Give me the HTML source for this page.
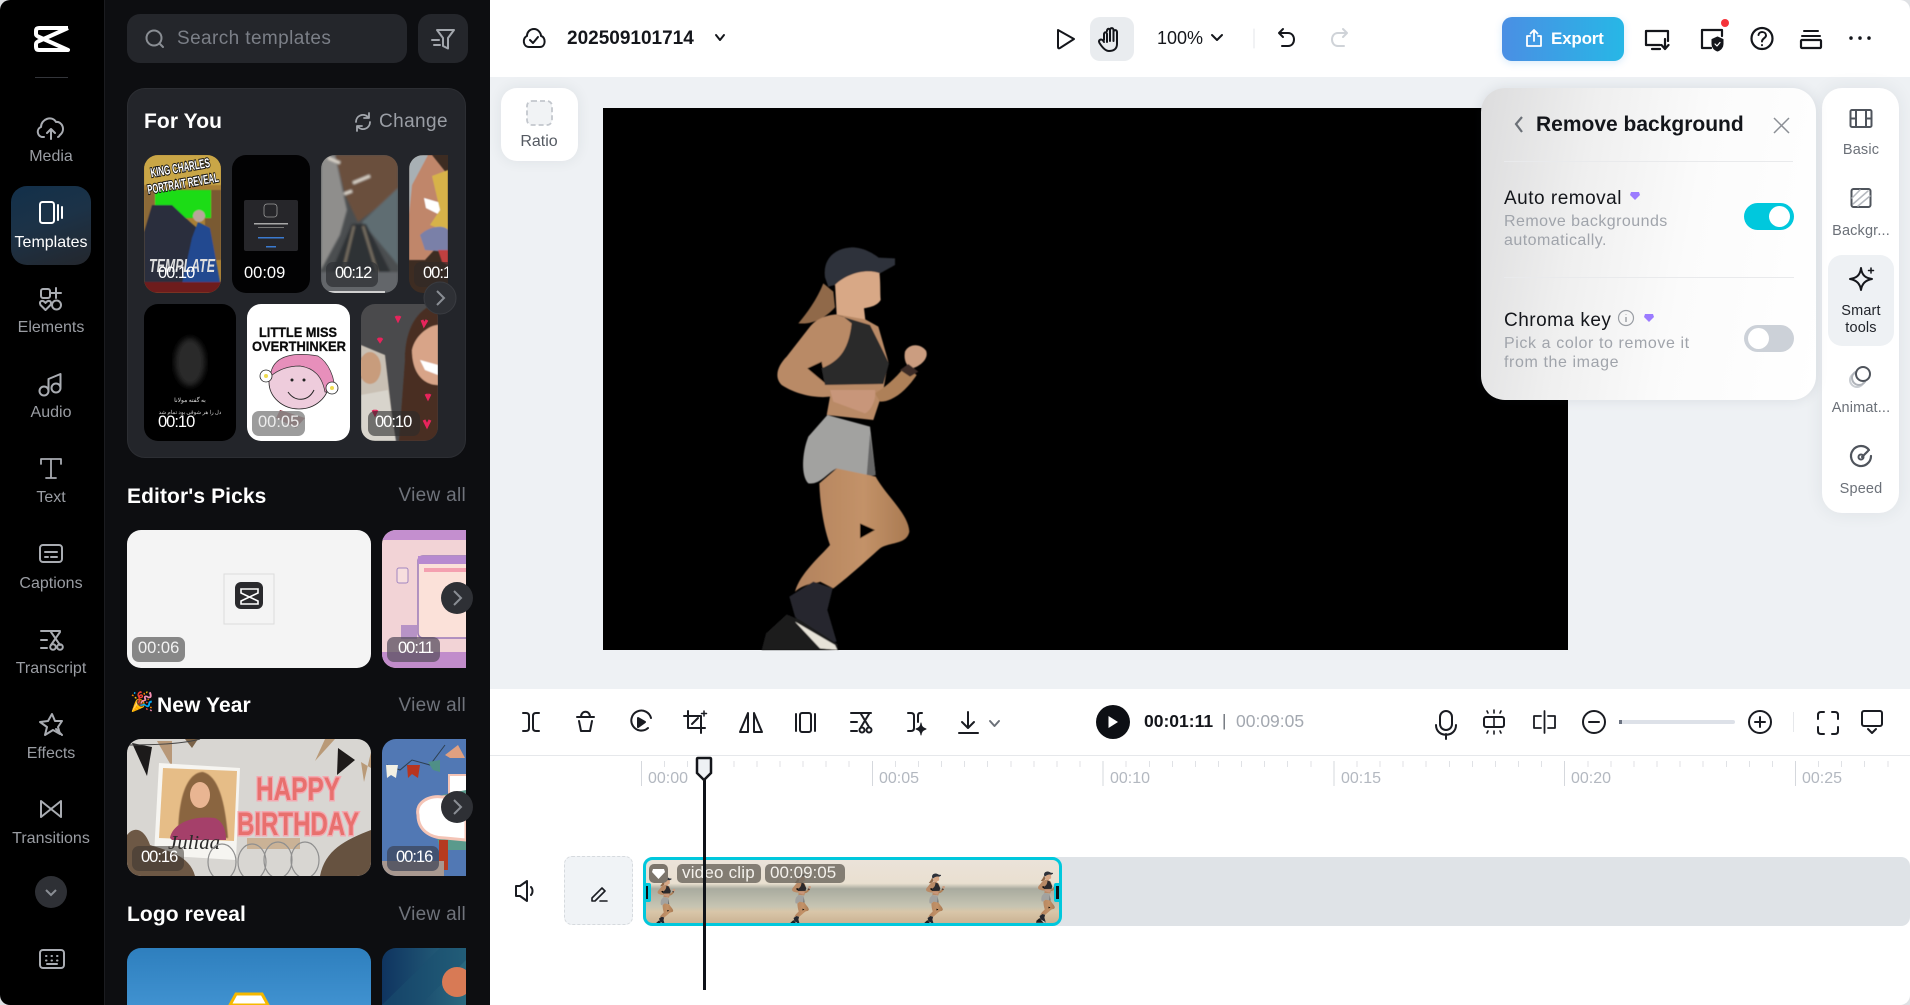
<!DOCTYPE html>
<html><head><meta charset="utf-8"><title>Editor</title>
<style>
*{box-sizing:border-box}
html,body{margin:0;padding:0;width:1910px;height:1005px;overflow:hidden;background:#dfe1e4;font-family:"Liberation Sans","Noto Sans CJK SC",sans-serif}
.a{position:absolute}
.t{position:absolute;white-space:nowrap;line-height:1.2}
.c{transform:translateX(-50%);text-align:center}
.rl{font-size:16px;color:#9a9da3;left:51px}
.sec{font-size:21px;font-weight:700;color:#fff;left:127px;letter-spacing:.1px}
.va{font-size:19px;color:#6f737b;right:1444px;letter-spacing:.3px}
.rt{font-size:14.5px;color:#6b7078;left:1861px;letter-spacing:.15px}
.rul{font-size:16px;color:#b3b8c0}
.d{font-size:16.5px;color:#fff}
.n{font-size:16.5px;color:#fff;letter-spacing:-1px}
</style></head><body>

<div class="a" style="left:0;top:0;width:1910px;height:1005px;background:#fff;border-radius:10px;overflow:hidden">
<!-- rail + panel -->
<div class="a" style="left:0;top:0;width:104px;height:1005px;background:#000"></div>
<div class="a" style="left:104px;top:0;width:386px;height:1005px;background:#0d0e11;border-left:1px solid #1b1c20"></div>
<div class="a" style="left:11px;top:186px;width:80px;height:79px;border-radius:16px;background:linear-gradient(160deg,#12304a 0%,#1c3247 45%,#24272d 100%)"></div>
<div class="a" style="left:35px;top:77px;width:33px;height:1px;background:#33353a"></div>
<div class="a" style="left:127px;top:14px;width:280px;height:49px;border-radius:13px;background:#24262b"></div>
<div class="a" style="left:418px;top:14px;width:50px;height:49px;border-radius:13px;background:#24262b"></div>
<div class="a" style="left:127px;top:88px;width:339px;height:370px;border-radius:18px;background:#23252a;border:1px solid #2c2e33"></div>
<div class="a" style="left:490px;top:469px;width:7px;height:69px;border-radius:0 8px 8px 0;background:#1d1f23"></div>

<!-- main -->
<div class="a" style="left:490px;top:77px;width:1420px;height:612px;background:#eef1f4"></div>
<div class="a" style="left:603px;top:108px;width:965px;height:542px;background:#000"></div>
<div class="a" style="left:1090px;top:17px;width:44px;height:44px;border-radius:10px;background:#e9ecef"></div>
<div class="a" style="left:1502px;top:17px;width:122px;height:44px;border-radius:10px;background:linear-gradient(90deg,#4a8fe4,#27b7e6);box-shadow:0 2px 8px rgba(60,150,230,.2)"></div>
<div class="a" style="left:501px;top:88px;width:77px;height:73px;border-radius:16px;background:#fff;box-shadow:0 0 14px rgba(40,50,70,.08)"></div>
<div class="a" style="left:1822px;top:88px;width:77px;height:425px;border-radius:20px;background:#fff;box-shadow:0 0 18px rgba(40,50,70,.08)"></div>
<div class="a" style="left:1828px;top:255px;width:66px;height:91px;border-radius:14px;background:#eef1f4"></div>
<div class="a" style="left:1481px;top:88px;width:335px;height:312px;border-radius:24px;background:linear-gradient(100deg,#dcdcdd 0%,#efefef 30%,#fbfbfb 60%,#fff 100%);box-shadow:0 0 12px rgba(40,50,70,.1)"></div>
<div class="a" style="left:1504px;top:161px;width:289px;height:1px;background:#e9eaec"></div>
<div class="a" style="left:1504px;top:277px;width:290px;height:1px;background:#e9eaec"></div>
<div class="a" style="left:1744px;top:203px;width:50px;height:27px;border-radius:14px;background:#00c8dd"></div>
<div class="a" style="left:1769px;top:206px;width:21px;height:21px;border-radius:50%;background:#fff"></div>
<div class="a" style="left:1744px;top:325px;width:50px;height:27px;border-radius:14px;background:#ccd1d8"></div>
<div class="a" style="left:1748px;top:328px;width:21px;height:21px;border-radius:50%;background:#fff"></div>

<!-- timeline -->
<div class="a" style="left:490px;top:755px;width:1420px;height:1px;background:#e6e8eb"></div>
<div class="a" style="left:641px;top:761px;width:1269px;height:6px;background:repeating-linear-gradient(90deg,#e0e2e6 0 1px,transparent 1px 23.08px)"></div>
<div class="a" style="left:641px;top:761px;width:1269px;height:25px;background:repeating-linear-gradient(90deg,#d5d8dd 0 1px,transparent 1px 230.8px)"></div>
<div class="a" style="left:564px;top:856px;width:69px;height:69px;border-radius:8px;background:#f0f3f6;border:1px dashed #d6dade"></div>
<div class="a" style="left:643px;top:857px;width:1267px;height:69px;border-radius:9px;background:#dfe3e7"></div>
<div class="a" style="left:1619px;top:720px;width:116px;height:4px;border-radius:2px;background:#dde1e8"></div>
<div class="a" style="left:1619px;top:720px;width:3px;height:4px;background:#6b7280"></div>
<div class="a" style="left:1793px;top:712px;width:1px;height:20px;background:#e6e8eb"></div>

<svg class="a" style="left:0;top:0" width="1910" height="1005" viewBox="0 0 1910 1005" fill="none" xmlns="http://www.w3.org/2000/svg">
<defs>
<clipPath id="c1"><rect x="144" y="155" width="77" height="138" rx="14"/></clipPath>
<clipPath id="c2"><rect x="232" y="155" width="78" height="138" rx="14"/></clipPath>
<clipPath id="c3"><rect x="321" y="155" width="77" height="138" rx="14"/></clipPath>
<clipPath id="c4"><path d="M423 155H448V293H423a14 14 0 0 1-14-14V169a14 14 0 0 1 14-14z"/></clipPath>
<clipPath id="c5"><rect x="144" y="304" width="92" height="137" rx="14"/></clipPath>
<clipPath id="c6"><rect x="247" y="304" width="103" height="137" rx="14"/></clipPath>
<clipPath id="c7"><rect x="361" y="304" width="77" height="137" rx="14"/></clipPath>
<clipPath id="e1"><rect x="127" y="530" width="244" height="138" rx="14"/></clipPath>
<clipPath id="e2"><path d="M396 530H466V668H396a14 14 0 0 1-14-14V544a14 14 0 0 1 14-14z"/></clipPath>
<clipPath id="n1"><rect x="127" y="739" width="244" height="137" rx="14"/></clipPath>
<clipPath id="n2"><path d="M396 739H466V876H396a14 14 0 0 1-14-14V753a14 14 0 0 1 14-14z"/></clipPath>
<clipPath id="l1"><rect x="127" y="948" width="244" height="90" rx="14"/></clipPath>
<clipPath id="l2"><path d="M396 948H466V1040H396a14 14 0 0 1-14-14V962a14 14 0 0 1 14-14z"/></clipPath>
<clipPath id="clip"><rect x="646" y="860" width="413" height="63" rx="5"/></clipPath>
<filter id="b05"><feGaussianBlur stdDeviation=".6"/></filter>
<filter id="b1"><feGaussianBlur stdDeviation="1"/></filter>
<filter id="b2"><feGaussianBlur stdDeviation="3"/></filter>
<linearGradient id="beach" x1="0" y1="0" x2="0" y2="1"><stop offset="0" stop-color="#ebe2da"/><stop offset=".38" stop-color="#e9e0d0"/><stop offset=".46" stop-color="#a9ab9f"/><stop offset=".72" stop-color="#c6c4b2"/><stop offset=".8" stop-color="#d9c6a9"/><stop offset="1" stop-color="#c8b08f"/></linearGradient>
<linearGradient id="lb" x1="0" y1="0" x2="0" y2="1"><stop offset="0" stop-color="#2e7fbe"/><stop offset="1" stop-color="#4a9cda"/></linearGradient>
<linearGradient id="lb2" x1="0" y1="0" x2="1" y2="0"><stop offset="0" stop-color="#0f3460"/><stop offset="1" stop-color="#2a6a80"/></linearGradient>
<linearGradient id="skin" x1="0" y1="0" x2="1" y2="0"><stop offset="0" stop-color="#b2825e"/><stop offset=".6" stop-color="#c39268"/><stop offset="1" stop-color="#a97a52"/></linearGradient>
<symbol id="runner" viewBox="0 0 720 1320">
<path d="M310 190C290 240 260 280 235 310C280 315 320 290 345 262L340 215Z" fill="#90694a"/>
<path d="M345 190C390 150 450 145 478 155C482 190 480 215 482 240C470 260 445 262 432 265L436 300L350 285Z" fill="#d8a886"/>
<path d="M315 172C308 120 340 85 395 82C430 82 460 100 476 113L525 115L525 135L480 160C440 145 380 160 345 195L325 200Z" fill="#2e323a"/>
<path d="M350 283L436 298L475 320L505 425L490 510L460 600L320 585L330 530C290 535 230 525 185 495C160 470 175 435 200 410L270 320C290 295 320 285 350 283Z" fill="#b98a66"/>
<path d="M262 445L305 425L318 492Z" fill="#000"/>
<path d="M465 520C500 500 530 470 555 440L590 465C560 510 520 545 480 545Z" fill="#ae8058"/>
<path d="M555 395C565 372 600 368 618 392C628 415 600 440 575 445C560 440 550 420 555 395Z" fill="#cb9d80"/>
<path d="M540 450L565 432L595 455L570 470Z" fill="#3a2a28"/>
<path d="M330 510L465 510C470 540 450 575 435 580L340 545Z" fill="#c8967a"/>
<path d="M305 445C350 425 385 400 395 310L370 290L345 283L400 300L450 315L480 375L507 430L490 492L315 495Z" fill="#2b292c"/>
<path d="M322 585L450 620L467 765L385 778L350 745C320 760 300 795 265 790C243 770 245 700 265 650Z" fill="#a2a2a0"/>
<path d="M450 640L467 765L440 768Z" fill="#666"/>
<path d="M298 790L350 745L467 770C500 830 565 880 568 935C560 975 510 965 480 985C430 1030 380 1075 340 1105L300 1085C300 1090 260 1085 225 1115C240 1060 300 1010 330 975C310 920 300 850 298 790Z" fill="url(#skin)"/>
<path d="M420 910L465 930L420 955Z" fill="#000"/>
<path d="M208 1130L280 1085L338 1105L322 1170L350 1265L300 1272L225 1190Z" fill="#25272f"/>
<path d="M125 1290L138 1240L200 1183L240 1200L352 1272L355 1290Z" fill="#1d1c1e"/>
<path d="M225 1205L345 1275L352 1290L300 1285Z" fill="#e7e3d8"/>
</symbol>
</defs>

<!-- For You thumbs -->
<g clip-path="url(#c1)">
<rect x="144" y="155" width="77" height="138" fill="#a87f35"/>
<g filter="url(#b05)">
<rect x="144" y="155" width="77" height="30" fill="#c9a646"/>
<rect x="205" y="190" width="16" height="70" fill="#7a5a30"/>
<rect x="144" y="190" width="12" height="60" fill="#8c6a38"/>
<rect x="155" y="190" width="56" height="28" fill="#1fdc19"/>
<path d="M144 232L152 205L172 205L190 222L205 235L221 293H144Z" fill="#2a2f3d"/>
<path d="M180 293L192 238L198 222L210 228L216 260L222 293Z" fill="#204a90"/>
<circle cx="199" cy="216" r="6" fill="#b8a59a"/>
<rect x="144" y="282" width="77" height="11" fill="#6e1a1f"/>
</g>
<g transform="rotate(-10 182 178)" font-family="Liberation Sans" font-size="13" font-weight="700" fill="#fff" stroke="#111" stroke-width="2" paint-order="stroke" text-anchor="middle"><text x="182" y="172" textLength="60" lengthAdjust="spacingAndGlyphs">KING CHARLES</text><text x="182" y="188" textLength="72" lengthAdjust="spacingAndGlyphs">PORTRAIT REVEAL</text></g>
<text x="149" y="272" font-family="Liberation Sans" font-size="18" font-weight="700" font-style="italic" fill="#dedede" textLength="66" lengthAdjust="spacingAndGlyphs">TEMPLATE</text>
</g>
<g clip-path="url(#c2)">
<rect x="232" y="155" width="78" height="138" fill="#020203"/>
<rect x="244" y="200" width="54" height="51" rx="2" fill="#26262a"/>
<rect x="264" y="204" width="13" height="13" rx="3" stroke="#9a9a9a" stroke-width=".8"/>
<rect x="254" y="223" width="34" height="1.5" fill="#a8a8a8"/><rect x="258" y="227" width="26" height="1" fill="#777"/>
<rect x="258" y="237" width="26" height="1.5" fill="#3a7ad0"/><rect x="266" y="246" width="10" height="1.5" fill="#3a7ad0"/>
</g>
<g clip-path="url(#c3)">
<rect x="321" y="155" width="77" height="138" fill="#4b4e50"/>
<g filter="url(#b1)">
<path d="M321 155H398V192L358 222L345 195L335 155Z" fill="#6a4f3c"/>
<path d="M321 155H335L347 210L340 235L321 270Z" fill="#8f8e8c"/>
<path d="M398 188L362 222L398 265Z" fill="#5f6d72"/>
<path d="M330 275L352 224L366 224L392 275Z" fill="#2e3134"/>
<path d="M342 275L354 226M378 275L363 226" stroke="#786f62" stroke-width="2.500"/>
<rect x="321" y="272" width="77" height="21" fill="#63666a"/>
<path d="M353 183L370 176M328 158L340 163M344 194L352 191" stroke="#d8d2c8" stroke-width="3"/>
</g>
<rect x="326" y="262" width="52" height="25" rx="7" fill="#2f3236" opacity=".75"/>
<rect x="325" y="291" width="60" height="2" fill="#d0d0d0"/>
</g>
<g clip-path="url(#c4)">
<rect x="409" y="155" width="39" height="138" fill="#3d2c22"/>
<g filter="url(#b05)">
<path d="M409 155H432L448 175V235L425 260H409Z" fill="#c0866a"/>
<path d="M409 155H428L412 185L409 215Z" fill="#a8b0b4"/>
<path d="M424 198L448 205L440 215L426 208Z" fill="#fff"/>
<path d="M432 176L448 170V232L430 225L440 210Z" fill="#d7b24a"/>
<path d="M420 235C430 225 445 225 448 230V252L425 250Z" fill="#7a80a8"/>
<path d="M438 250L448 250V265L442 262Z" fill="#c04040"/>
</g>
<rect x="414" y="262" width="40" height="25" rx="7" fill="#2f2a28" opacity=".6"/>
</g>
<g clip-path="url(#c5)">
<rect x="144" y="304" width="92" height="137" fill="#000"/>
<ellipse cx="190" cy="362" rx="15" ry="24" fill="#2c2c2c" filter="url(#b2)"/>
<text x="190" y="402" font-family="Noto Sans CJK SC,Liberation Sans,sans-serif" font-size="6" fill="#ddd" text-anchor="middle" direction="rtl">به گفته مولانا</text>
<text x="190" y="414" font-family="Noto Sans CJK SC,Liberation Sans,sans-serif" font-size="5.5" fill="#ccc" text-anchor="middle" direction="rtl">دل را هر شوقی بود تمام شد</text>
</g>
<g clip-path="url(#c6)">
<rect x="247" y="304" width="103" height="137" fill="#fff"/>
<text x="298" y="337" font-family="Liberation Sans" font-size="14" font-weight="700" fill="#0b0b0b" text-anchor="middle" textLength="78" lengthAdjust="spacingAndGlyphs" stroke="#0b0b0b" stroke-width=".3">LITTLE MISS</text>
<text x="299" y="351" font-family="Liberation Sans" font-size="14" font-weight="700" fill="#0b0b0b" text-anchor="middle" textLength="94" lengthAdjust="spacingAndGlyphs" stroke="#0b0b0b" stroke-width=".3">OVERTHINKER</text>
<ellipse cx="299" cy="382" rx="30" ry="27" fill="#eeccdc" stroke="#222" stroke-width=".8"/>
<path d="M271 372C275 355 295 352 318 356C328 362 336 378 334 392L325 392C322 376 314 368 300 366C288 366 278 370 271 376Z" fill="#e78fbb" stroke="#333" stroke-width=".7"/>
<circle cx="266" cy="376" r="6" fill="#fff" stroke="#222" stroke-width=".8"/><circle cx="266" cy="376" r="2" fill="#f0dc50"/>
<circle cx="332" cy="388" r="6" fill="#fff" stroke="#222" stroke-width=".8"/><circle cx="332" cy="388" r="2" fill="#f0dc50"/>
<path d="M288 392C295 402 308 402 314 390" stroke="#222" stroke-width="1"/><circle cx="292" cy="380" r="1.500" fill="#222"/><circle cx="304" cy="380" r="1.500" fill="#222"/>
<path d="M280 410L305 418L296 428L276 418Z" fill="#8a2f3a"/>
<rect x="252" y="411" width="53" height="25" rx="7" fill="#8b8b8b" opacity=".85"/>
</g>
<g clip-path="url(#c7)">
<rect x="361" y="304" width="77" height="137" fill="#4a4a4c"/>
<g filter="url(#b05)">
<path d="M361 345L385 355L395 441H361Z" fill="#c9c0b4"/>
<ellipse cx="370" cy="368" rx="11" ry="16" fill="#c89c7c"/>
<path d="M361 395L388 390L396 441H361Z" fill="#d8d4cc"/>
<path d="M399 441L405 360C405 320 425 305 438 304V441Z" fill="#4a2e20"/>
<path d="M412 350C415 335 430 325 438 325V385C425 385 412 375 412 350Z" fill="#d8a488"/>
<path d="M420 360L438 365V375L425 370Z" fill="#fff"/>
</g>
<path d="M396 316l2 4 2-4M422 320l2 5 3-5M378 338l2 3 2-3M426 394l2 4 2-4M424 420l3 6 3-6M373 410l2 4 2-4" stroke="#e8245c" stroke-width="3"/>
<rect x="368" y="411" width="52" height="25" rx="7" fill="#2c2c2c" opacity=".6"/>
</g>
<circle cx="440" cy="298" r="16" fill="#2e3035" stroke="#3a3c41"/>
<path d="M437 291l7 7-7 7" stroke="#8a8e94" stroke-width="2"/>

<!-- Editor's picks -->
<g clip-path="url(#e1)">
<rect x="127" y="530" width="244" height="138" fill="#f4f4f4"/>
<rect x="224" y="574" width="50" height="50" fill="none" stroke="#dcdcdc"/>
<rect x="235" y="582" width="28" height="27" rx="6" fill="#2a2a2d"/>
<path d="M258 589H241V593L258 601V604H241V601L258 593Z" stroke="#fff" stroke-width="1.600"/>
</g>
<g clip-path="url(#e2)">
<rect x="382" y="530" width="84" height="138" fill="#f2d3d6"/>
<rect x="382" y="530" width="84" height="10" fill="#c48fcf"/>
<rect x="382" y="652" width="84" height="16" fill="#c18ccb"/>
<rect x="418" y="556" width="60" height="82" rx="5" fill="#fbe1d9" stroke="#9a79b8" stroke-width="1.500"/>
<rect x="418" y="556" width="60" height="8" fill="#b78ad0"/>
<rect x="424" y="568" width="50" height="4" fill="#f4a0b0"/>
<rect x="397" y="568" width="11" height="15" rx="2" fill="#f7dede" stroke="#a286c0"/>
<rect x="401" y="625" width="16" height="14" fill="#b793c6"/>
</g>
<circle cx="457" cy="598" r="16" fill="#2e3035"/>
<path d="M454 591l7 7-7 7" stroke="#8a8e94" stroke-width="2"/>
<rect x="132" y="637" width="53" height="25" rx="7" fill="#878787"/>
<rect x="387" y="637" width="53" height="25" rx="7" fill="#5a5060" opacity=".75"/>

<!-- New Year -->
<g clip-path="url(#n1)">
<rect x="127" y="739" width="244" height="137" fill="#d8d6d2"/>
<path d="M132 743L152 747L147 776Z" fill="#1c1a1a"/>
<path d="M157 741L172 741L172 767Z" fill="#b89878"/>
<path d="M185 739H198L192 748Z" fill="#7a6248"/>
<path d="M127 745C140 745 180 745 200 739" stroke="#444" stroke-width="1"/>
<path d="M315 761L325 739H335Z" fill="#b99a78"/>
<path d="M338 748L355 760L337 775Z" fill="#1e1b1a"/><path d="M361 762L371 768V752L364 782Z" fill="#b99a78"/>
<path d="M159 763L240 768L236 860L154 855Z" fill="#f6f5f1"/>
<path d="M163 768L237 771L234 841L159 838Z" fill="#e6bd87"/>
<path d="M178 838C178 790 190 772 203 772C218 776 225 800 228 838Z" fill="#8a6540" filter="url(#b05)"/>
<ellipse cx="200" cy="795" rx="10" ry="13" fill="#e9b592"/>
<path d="M170 838C172 825 190 815 215 818C224 822 226 832 226 840L172 840Z" fill="#a5406a"/>
<text x="168" y="849" font-family="Liberation Serif" font-size="20" font-style="italic" fill="#2a2a2a" textLength="52" lengthAdjust="spacingAndGlyphs">Juliaa</text>
<text x="298" y="800" font-family="Liberation Sans" font-size="32" font-weight="700" fill="#e8706e" stroke="#f4a8b0" stroke-width="3" paint-order="stroke" text-anchor="middle" textLength="84" lengthAdjust="spacingAndGlyphs">HAPPY</text>
<text x="298" y="835" font-family="Liberation Sans" font-size="32" font-weight="700" fill="#e8706e" stroke="#f4a8b0" stroke-width="3" paint-order="stroke" text-anchor="middle" textLength="122" lengthAdjust="spacingAndGlyphs">BIRTHDAY</text>
<rect x="247" y="838" width="53" height="11" fill="#c8ab8c" opacity=".85"/>
<path d="M127 876V835C135 825 145 830 150 845C165 850 190 855 195 876Z" fill="#6d5845"/>
<path d="M320 876C325 850 345 840 371 830V876Z" fill="#665240"/>
<g stroke="#8f8f8f" stroke-width="1.200"><ellipse cx="222" cy="862" rx="14" ry="18"/><ellipse cx="252" cy="862" rx="14" ry="18"/><ellipse cx="278" cy="860" rx="14" ry="18"/><ellipse cx="305" cy="860" rx="14" ry="18"/></g>
<rect x="132" y="846" width="52" height="25" rx="7" fill="#3a3530" opacity=".55"/>
</g>
<g clip-path="url(#n2)">
<rect x="382" y="739" width="84" height="137" fill="#5178b4"/>
<path d="M387 765L400 770L412 760L430 765L445 745" stroke="#2d3f50"/>
<path d="M386 765H398L396 778L391 775L387 778Z" fill="#f2f0e4"/>
<path d="M407 765H420L418 778L412 774L408 778Z" fill="#b8351e"/>
<path d="M428 762L440 760L440 772L433 770Z" fill="#4f8f86"/>
<path d="M445 755L458 745L465 758H450Z" fill="#e0a080"/>
<rect x="449" y="775" width="18" height="30" fill="#fff" stroke="#f4c4b6" stroke-width="2"/>
<path d="M442 795L432 815L440 850H466V790Z" fill="#5a9a8c"/>
<path d="M418 815C415 802 430 795 442 797L466 795V840L445 838C430 838 418 830 418 815Z" fill="#fff" stroke="#f4c4b6" stroke-width="3"/>
<rect x="439" y="840" width="9" height="30" fill="#b63a20"/>
<rect x="382" y="861" width="62" height="15" fill="#a89890"/>
<rect x="387" y="846" width="52" height="25" rx="7" fill="#3a4254" opacity=".7"/>
</g>
<circle cx="457" cy="807" r="16" fill="#2e3035"/>
<path d="M454 800l7 7-7 7" stroke="#8a8e94" stroke-width="2"/>

<!-- Logo reveal -->
<g clip-path="url(#l1)">
<rect x="127" y="948" width="244" height="90" fill="url(#lb)"/>
<path d="M230 1005L236 994H262L268 1005Z" fill="#fff" stroke="#f5b800" stroke-width="3"/>
</g>
<g clip-path="url(#l2)">
<rect x="382" y="948" width="84" height="90" fill="url(#lb2)"/>
<path d="M382 1005L440 948H466V960L420 1005Z" fill="#195070" opacity=".5"/>
<circle cx="457" cy="982" r="15" fill="#d87a55"/>
</g>

<!-- logo -->
<path d="M68 28H39Q36 28 36 31V34Q36 35.500 38 36.500L68 50H39Q36 50 36 47V44Q36 42.500 38 41.500L68 28" stroke="#fff" stroke-width="4" stroke-linejoin="round"/>

<!-- rail icons -->
<g stroke="#a9acb2" stroke-width="2" stroke-linecap="round" stroke-linejoin="round">
<path d="M44 137H43C37 137 36 129 41 127C41 119 52 115 56 122C62 121 66 130 60 135C59 136 59 137 58 137M51 139V129M47 133L51 129L55 133"/>
<g stroke="#fff"><rect x="40" y="202" width="14" height="21" rx="2.500"/><path d="M58 205V220M62 207V218"/></g>
<rect x="41" y="289" width="9" height="9" rx="2"/><path d="M56 288V298M51 293H61"/><path d="M45.500 310L40.500 305C39 302 41 300.500 43 301C44.500 301.500 45.500 303 45.500 303C45.500 303 46.500 301.500 48 301C50 300.500 52 302 50.500 305Z"/><circle cx="56.500" cy="305" r="4.500"/>
<circle cx="44" cy="391" r="4.500"/><circle cx="56" cy="388" r="4.500"/><path d="M48.500 390V379L60.500 374V387"/>
<path d="M41 464V459H61V464M51 459V478M46 478H56" stroke-width="1.800"/>
<rect x="40" y="545" width="22" height="17" rx="3"/><path d="M45 552H57M45 557H48M51 557H57"/>
<path d="M41 631H60M41 640H47M41 648H47M51 632L60 645M60 632L51 645"/><circle cx="53" cy="647" r="2.800"/><circle cx="60" cy="647" r="2.800"/>
<path d="M52 714L55 721L62 721L58 727L60 734L53 730L45 735L47 727L40 722L48 721Z"/><path d="M56 729L62 735"/>
<path d="M41 801L61 817V801L41 817Z"/>
<rect x="40" y="950" width="24" height="18" rx="3"/><path d="M46 956h.5M51.500 956h.5M57 956h.5M46 960.500h.5M51.500 960.500h.5M57 960.500h.5M47 964H57" stroke-width="2"/>
</g>
<circle cx="51" cy="892" r="16" fill="#2e3035"/>
<path d="M46 890L51 895L56 890" stroke="#8a8e94" stroke-width="2"/>

<!-- panel icons -->
<g stroke="#8a8e94" stroke-width="2" stroke-linecap="round" stroke-linejoin="round">
<circle cx="154" cy="38" r="7.500"/><path d="M160 44L163 47"/>
<path d="M437 30H454L448 38V48.500L443 46V38ZM432 40H439M434 45H440" stroke="#a3a7ad"/>
<path d="M356 122A7 7 0 0 1 368 117M369 113V118H364M370 122A7 7 0 0 1 358 127M357 131V126H362" stroke="#a3a7ad" stroke-width="1.800"/>
</g>

<!-- header icons -->
<g stroke="#14161b" stroke-width="2" stroke-linecap="round" stroke-linejoin="round">
<path d="M534 29C538 29 541 33 541 36C546 37 546 47 540 47H529C523 47 522 38 527 36C527 32 530 29 534 29ZM530 40L533 43L538 37"/>
<path d="M716 35L720 40L724 35"/>
<path d="M1058 30L1074 39L1060 48Q1058 49 1058 47Z"/>
<path d="M1107 42V34.500C1107 31.500 1104 31.500 1104 34.500V40M1110 41V31C1110 28 1107 28 1107 31M1110 40V30C1110 27.500 1113.500 27.500 1113.500 30V40M1113.500 41V32C1113.500 29.500 1117 29.500 1117 32V44C1117 50 1112 51 1109 51C1105 51 1102 47 1099.500 43C1098 40 1101 38.500 1103 40.500L1104 42"/>
<path d="M1212 35L1217 40L1222 35"/>
<path d="M1279 33L1283 29M1279 33L1283 37M1279 33H1288C1296 33 1296 46 1288 46H1282"/>
<path d="M1347 33L1343 29M1347 33L1343 37M1347 33H1338C1330 33 1330 46 1338 46H1344" stroke="#cfd3d8"/>
<path d="M1254 29V48" stroke="#e3e5e8" stroke-width="1"/>
<g stroke="#fff" stroke-width="1.800"><path d="M1530 36H1527V46H1541V36H1538M1534 41V30M1530.500 33.500L1534 30L1537.500 33.500"/></g>
<path d="M1668 41V31H1646V45H1660M1652 49H1660M1665 39V48M1661.500 45L1665 49L1668.500 45" stroke-width="2.200"/>
<path d="M1722 36V30H1702V48H1711" stroke-width="2.200"/>
<path d="M1717.500 37L1723 39.500V44C1723 47 1721 50 1717.500 51C1714 50 1712 47 1712 44V39.500Z" fill="#14161b" stroke-width="1"/>
<path d="M1715 44L1717 46L1720 42.500" stroke="#fff" stroke-width="1.200"/>
<circle cx="1762" cy="38.500" r="10.500" stroke-width="2.200"/><path d="M1758.500 35C1759 31 1766 31 1766 35.500C1766 38 1762 38.500 1762 41.500M1762 45v.3"/>
<path d="M1804 31H1818M1802 36H1820" stroke-width="2"/><rect x="1801" y="40" width="20" height="8" rx="1" stroke-width="2.200"/>
<path d="M1851 38v.1M1860 38v.1M1869 38v.1" stroke-width="3.500"/>
</g>
<circle cx="1725" cy="23" r="4" fill="#f5333a"/>

<!-- Ratio -->
<rect x="527" y="101" width="25" height="24" rx="5" fill="#f1f3f5" stroke="#c3c7cd" stroke-width="1.800" stroke-dasharray="5 3"/>

<!-- side tools -->
<g stroke="#4f545c" stroke-width="2" stroke-linecap="round" stroke-linejoin="round">
<rect x="1850.500" y="110" width="21" height="17" rx="1.500"/><path d="M1856 110V127M1866 110V127M1851 118.500H1856M1866 118.500H1871"/>
<rect x="1851.500" y="189" width="19" height="18" rx="2"/><path d="M1853 204L1868 191M1858 206L1870 196M1852 198L1860 190" stroke="#b5b9bf" stroke-width="1.500"/>
<path d="M1861 268C1862 276 1866 278 1872 279C1866 280 1862 283 1861 290C1860 283 1856 280 1850 279C1856 278 1860 276 1861 268Z" stroke="#15171c"/>
<path d="M1871 268v5M1868.500 270.500h5" stroke="#15171c" stroke-width="1.500"/>
<circle cx="1857" cy="380" r="7" stroke="#c9cdd2" stroke-width="2"/><circle cx="1859" cy="378" r="7" stroke="#b0b4ba" stroke-width="2"/>
<circle cx="1863" cy="374" r="7" fill="#fff"/>
<path d="M1869 450A10 10 0 1 0 1871 456M1862 457L1868 451" stroke-width="2.200"/><circle cx="1861" cy="457" r="2.500"/>
</g>

<!-- panel widget icons -->
<path d="M1522 117L1516 124L1522 132" stroke="#6b7077" stroke-width="2.200"/>
<path d="M1774 118L1789 133M1789 118L1774 133" stroke="#8b8f95" stroke-width="1.500"/>
<path d="M1631 192H1639L1640 195L1635 200L1630 195Z" fill="#9b7bff"/>
<path d="M1645 314H1653L1654 317L1649 322L1644 317Z" fill="#9b7bff"/>
<circle cx="1626" cy="318" r="7.500" stroke="#9a9ea4" stroke-width="1.200"/><path d="M1626 317V322M1626 314v.5" stroke="#8a8e94" stroke-width="1.200"/>

<!-- toolbar icons -->
<g stroke="#1a1c22" stroke-width="2" stroke-linecap="round" stroke-linejoin="round">
<path d="M523 713H526Q529 713 529 716V728Q529 731 526 731H523M539 713H536Q533 713 533 716V728Q533 731 536 731H539"/>
<path d="M577 717H594M581 717C581 710 590 710 590 717M579 721L581 731H590L592 721"/>
<path d="M648 728A10 10 0 1 1 651 718"/><path d="M638 718L645 722L638 727Z" fill="#1a1c22"/>
<path d="M688 711V728H705M684 716H701V733M692 724L698 718"/><path d="M704 711v5M701.500 713.500h5" stroke-width="1.500"/>
<path d="M740 732L748 713V732ZM754 713L762 732H754Z"/>
<rect x="800" y="713" width="11" height="19" rx="2"/><path d="M796 714V731M815 714V731"/>
<path d="M851 713H871M851 722H857M851 731H857M861 714L869 727M869 714L861 727"/><circle cx="862" cy="730" r="2.500"/><circle cx="869" cy="730" r="2.500"/>
<path d="M908 713H911Q914 713 914 716V728Q914 731 911 731H908M922 713H920Q918 713 918 716V722"/><path d="M921 723C921.500 727 923 728 926 729C923 730 921.500 731 921 735C920.500 731 919 730 916 729C919 728 920.500 727 921 723Z" fill="#1a1c22" stroke-width="1"/>
<path d="M968 712V727M962 722L968 728L974 722M959 733H978"/>
<path d="M990 721L994.500 726L999 721" stroke="#6b7078"/>
<rect x="1440" y="711" width="12" height="19" rx="6"/><path d="M1436 725C1436 738 1456 738 1456 725M1446 734V739"/>
<rect x="1484" y="717" width="20" height="10" rx="2"/><path d="M1494 717V727M1488 713l-1-2M1494 713v-3M1500 713l1-2M1488 731l-1 2M1494 731v3M1500 731l1 2" stroke-width="1.600"/>
<path d="M1544.500 711V733M1541 716H1534V728H1541M1548 716H1555V728H1548" stroke-width="1.800"/>
<circle cx="1594" cy="722" r="11"/><path d="M1589 722H1599"/>
<circle cx="1760" cy="722" r="11"/><path d="M1755 722H1765M1760 717V727"/>
<path d="M1818 719V715Q1818 712 1821 712H1824M1832 712H1835Q1838 712 1838 715V719M1838 727V731Q1838 734 1835 734H1832M1824 734H1821Q1818 734 1818 731V727"/>
<rect x="1862" y="711" width="20" height="15" rx="2"/><path d="M1868 729L1872 733L1876 729"/>
<path d="M516 886H520L527 881V901L520 896H516ZM531 887C533 889 533 893 531 895"/>
<path d="M592 898L602 888L605 891L595 901H592ZM600 901H607" stroke-width="1.600"/>
</g>
<circle cx="1113" cy="722" r="17" fill="#0d0f14"/>
<path d="M1108.500 716L1118 722L1108.500 728Z" fill="#fff"/>

<!-- clip -->
<g clip-path="url(#clip)">
<rect x="645" y="858" width="120" height="67" fill="url(#beach)"/>
<rect x="765" y="858" width="121" height="67" fill="url(#beach)"/>
<rect x="886" y="858" width="122" height="67" fill="url(#beach)"/>
<rect x="1008" y="858" width="54" height="67" fill="url(#beach)"/>
<use href="#runner" x="650" y="874" width="30" height="52"/>
<use href="#runner" x="784" y="870" width="32" height="56"/>
<use href="#runner" x="918" y="870" width="32" height="56"/>
<use href="#runner" x="1030" y="868" width="32" height="56"/>
</g>
<rect x="644.500" y="858.500" width="416" height="66" rx="8" stroke="#00c8dd" stroke-width="3"/>
<rect x="644" y="883" width="7" height="19" rx="2" fill="#00c8dd"/><rect x="646" y="886" width="2" height="13" fill="#0d0f14"/>
<rect x="1054" y="883" width="7" height="19" rx="2" fill="#00c8dd"/><rect x="1056" y="886" width="3" height="13" fill="#0d0f14"/>
<rect x="649" y="864" width="19" height="19" rx="5" fill="#7c756c"/>
<path d="M653 869H664L665 872L658.500 879L652 872Z" fill="#fff"/>
<rect x="677" y="864" width="84" height="19" rx="5" fill="#6d665e" opacity=".82"/>
<rect x="765" y="864" width="80" height="19" rx="5" fill="#6d665e" opacity=".82"/>

<!-- runner main -->
<use href="#runner" x="720" y="220" width="240" height="440" filter="url(#b05)"/>
</svg>

<!-- thumbnail time labels -->
<span class="t n" style="left:158px;top:264px">00:10</span>
<span class="t d" style="left:244px;top:264px">00:09</span>
<span class="t n" style="left:335px;top:264px">00:12</span>
<div class="a" style="left:423px;top:264px;width:25px;height:22px;overflow:hidden"><span class="t n" style="left:0;top:0">00:1</span></div>
<span class="t n" style="left:158px;top:413px">00:10</span>
<span class="t d" style="left:258px;top:413px;color:#ececec">00:05</span>
<span class="t n" style="left:375px;top:413px">00:10</span>
<span class="t d" style="left:138px;top:639px;color:#f2f2f2">00:06</span>
<span class="t n" style="left:398px;top:639px">00:11</span>
<span class="t n" style="left:141px;top:848px">00:16</span>
<span class="t n" style="left:396px;top:848px">00:16</span>

<!-- rail labels -->
<span class="t c rl" style="top:147px">Media</span>
<span class="t c rl" style="top:233px;color:#fff">Templates</span>
<span class="t c rl" style="top:318px">Elements</span>
<span class="t c rl" style="top:403px">Audio</span>
<span class="t c rl" style="top:488px">Text</span>
<span class="t c rl" style="top:574px">Captions</span>
<span class="t c rl" style="top:659px">Transcript</span>
<span class="t c rl" style="top:744px">Effects</span>
<span class="t c rl" style="top:829px">Transitions</span>

<!-- panel text -->
<span class="t" style="left:177px;top:28px;font-size:19px;color:#7b7f87;letter-spacing:.4px">Search templates</span>
<span class="t" style="left:144px;top:109px;font-size:21px;font-weight:700;color:#fff;letter-spacing:.1px">For You</span>
<span class="t" style="left:379px;top:111px;font-size:19px;color:#9a9ea5;letter-spacing:.4px">Change</span>
<span class="t sec" style="top:484px">Editor's Picks</span>
<span class="t va" style="top:485px">View all</span>
<span class="t" style="left:130px;top:692px;font-size:19px">🎉</span>
<span class="t sec" style="left:157px;top:693px">New Year</span>
<span class="t va" style="top:695px">View all</span>
<span class="t sec" style="top:902px">Logo reveal</span>
<span class="t va" style="top:904px">View all</span>

<!-- header text -->
<span class="t" style="left:567px;top:28px;font-size:19px;font-weight:700;color:#14161b">202509101714</span>
<span class="t" style="left:1157px;top:28px;font-size:18px;color:#14161b">100%</span>
<span class="t" style="left:1551px;top:29px;font-size:17px;font-weight:700;color:#fff;letter-spacing:-.2px">Export</span>
<span class="t c" style="left:539px;top:132px;font-size:16px;color:#555a62">Ratio</span>

<!-- remove bg panel -->
<span class="t" style="left:1536px;top:112px;font-size:21px;font-weight:700;color:#14161b">Remove background</span>
<span class="t" style="left:1504px;top:188px;font-size:19px;color:#14161b;letter-spacing:.5px">Auto removal</span>
<span class="t" style="left:1504px;top:212px;font-size:16px;color:#a0a4ab;letter-spacing:.45px">Remove backgrounds</span>
<span class="t" style="left:1504px;top:231px;font-size:16px;color:#a0a4ab;letter-spacing:.45px">automatically.</span>
<span class="t" style="left:1504px;top:310px;font-size:19px;color:#14161b;letter-spacing:.5px">Chroma key</span>
<span class="t" style="left:1504px;top:334px;font-size:16px;color:#a0a4ab;letter-spacing:.6px">Pick a color to remove it</span>
<span class="t" style="left:1504px;top:353px;font-size:16px;color:#a0a4ab;letter-spacing:.6px">from the image</span>

<!-- side tool text -->
<span class="t c rt" style="top:142px">Basic</span>
<span class="t c rt" style="top:223px">Backgr...</span>
<span class="t c rt" style="top:303px;color:#22252b">Smart</span>
<span class="t c rt" style="top:320px;color:#22252b">tools</span>
<span class="t c rt" style="top:400px">Animat...</span>
<span class="t c rt" style="top:481px">Speed</span>

<!-- timeline text -->
<span class="t" style="left:1144px;top:711px;font-size:17.500px;font-weight:700;color:#14161b">00:01:11</span>
<span class="t" style="left:1222px;top:711px;font-size:17px;color:#6b7078">|</span>
<span class="t" style="left:1236px;top:711px;font-size:17.500px;color:#a3a8b0">00:09:05</span>
<span class="t rul" style="left:648px;top:769px">00:00</span>
<span class="t rul" style="left:879px;top:769px">00:05</span>
<span class="t rul" style="left:1110px;top:769px">00:10</span>
<span class="t rul" style="left:1341px;top:769px">00:15</span>
<span class="t rul" style="left:1571px;top:769px">00:20</span>
<span class="t rul" style="left:1802px;top:769px">00:25</span>
<span class="t" style="left:682px;top:863px;font-size:17px;color:#f4f1ec;letter-spacing:.2px">video clip</span>
<span class="t" style="left:770px;top:863px;font-size:17px;color:#f4f1ec">00:09:05</span>

<!-- playhead -->
<div class="a" style="left:703px;top:770px;width:2.500px;height:220px;background:#0f1218"></div>
<svg class="a" style="left:695px;top:756px" width="18" height="26" viewBox="0 0 18 26"><path d="M3 2H15Q16 2 16 3V17L9 24L2 17V3Q2 2 3 2Z" fill="#eef1f4" stroke="#14161b" stroke-width="2.500"/></svg>
</div>
</body></html>
